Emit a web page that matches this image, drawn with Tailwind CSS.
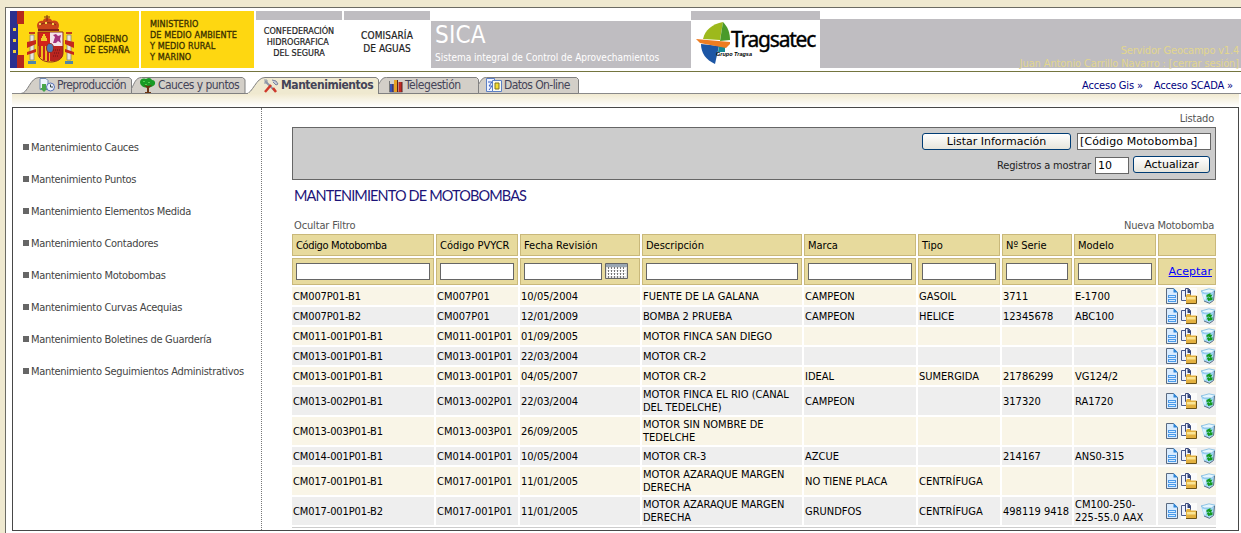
<!DOCTYPE html>
<html lang="es">
<head>
<meta charset="utf-8">
<title>SICA - Mantenimiento de Motobombas</title>
<script src="https://cdn.jsdelivr.net/npm/@tailwindcss/browser@4"></script>
</head>
<body class="h-[533px] overflow-hidden bg-[#efe9d0] pt-[7px] pl-[5px] text-[11px] leading-[13px] text-black font-['DejaVu_Sans_Condensed','DejaVu_Sans',sans-serif] [font-stretch:condensed]">

<svg class="hidden">
  <symbol id="doc" viewBox="0 0 12 16">
    <path d="M.5.5h7l4 4v11H.5z" fill="#d9ecff" stroke="#5a6a80"/>
    <path d="M7.500 0v4.500H12z" fill="#2f86d8"/>
    <path d="M2 7h8v3H2zM2 11h8v3H2z" fill="#4b9bea"/>
    <path d="M3 8.500h6M3 12.500h6" stroke="#d8ecff"/>
  </symbol>
  <symbol id="folder" viewBox="0 0 16 16">
    <path d="M0 0h16v16H0z" fill="#fbfbfb"/>
    <path d="M.5 2.500h4l2 2v8h-6z" fill="#eef2ff" stroke="#4a5a8a"/>
    <path d="M4.500.5h3l2 2v6h-5z" fill="#f3f6ff" stroke="#3c4a7a"/>
    <path d="M6.500 0L10 3.500V5H6.500z" fill="#33457c"/>
    <path d="M5 7.500L6 6h3l1 1.500h5.500V15H5z" fill="#e3b140"/>
    <path d="M6 9h8.500v2.500H6z" fill="#fae596"/>
    <path d="M5 15.500h10.500V8" fill="none" stroke="#6a5118"/>
  </symbol>
  <symbol id="bin" viewBox="0 0 14 16">
    <path d="M0 3l8-2 6 1-1 10-4.500 3.500L3 13z" fill="#a4d8f8"/>
    <path d="M0 3L8 .8l6 1.400L10.500 5 3 5z" fill="#e4f6ff" stroke="#7fb9e0" stroke-width=".8"/>
    <path d="M1.500 6L5 6.500 4.500 12 3 11z" fill="#dff3ff"/>
    <path d="M13.500 3l-1 9.500-4 2.800L3 13" fill="none" stroke="#5d6f84"/>
    <path d="M5.500 7l4-2v2l2-.5-2 3.500-2-1.500-2 .8zM11.500 12l-4.500 1v-1.500H5.500L7 8.800l1.500 1.400L11.500 9z" fill="#129a1d"/>
  </symbol>
</svg>

<div class="h-[540px] border-t border-l border-[#6b6b63] bg-white pt-[3px] pl-1">

  <header class="flex h-[57px] w-[1231px]">
    <div class="flex w-[129px] bg-[#fed711]">
      <svg class="shrink-0" width="68" height="57" viewBox="0 0 68 57">
        <path d="M0 0h7v57H0z" fill="#2b2f8f"/><path d="M7 0h7v13H7zM7 44h7v13H7z" fill="#b5291c"/><path d="M7 13h7v31H7z" fill="#fed711"/><path d="M7 13h1v31H7z" fill="#2b2f8f"/>
        <path d="M3 17h3v3H3zM3 28h3v3H3zM3 39h3v3H3z" fill="#f0cf3a"/>
        <path d="M28 18c-3-6 2-9 5-8 0-2 2-3 4-3s5 1 5 3c5-2 9 3 6 8z" fill="#c9441b"/>
        <path d="M30 14c4-3 12-3 16 0M37 4v6M34 6h6" fill="none" stroke="#7c2d12"/>
        <path d="M29 12h2v2h-2zM35 11h2v2h-2zM42 12h2v2h-2z" fill="#f5d34a"/>
        <path d="M28 19h21" stroke="#842015" stroke-width="2"/>
        <path d="M28 21h12v14H28z" fill="#d3231a"/><path d="M40 21h13v14H40z" fill="#f4e3ea"/>
        <path d="M28 35h12v15c-7 1-12-3-12-8z" fill="#f2bd1a"/><path d="M40 35h13v7c0 6-6 9-13 8z" fill="#b92420"/>
        <path d="M30 35v11M34 35v14M38 35v15" stroke="#c3231d" stroke-width="2"/>
        <path d="M31 30h6v-3h-1v-2h-1v-2h-2v2h-1v2h-1z" fill="#f2cc2c"/>
        <path d="M43 32l2-6-2-2 3-1 2 2 3-1-1 4 1 4-3-2-2 2z" fill="#a5317c"/>
        <ellipse cx="40" cy="37" rx="3.500" ry="4.500" fill="#4a7bb5" stroke="#9b2c20"/>
        <path d="M43 39h8M44 42h6M43 45h6" stroke="#6b1414" stroke-dasharray="1 1"/>
        <path d="M28 21h25v21c0 6-6 9-12.500 9S28 48 28 42z" fill="none" stroke="#8d2a1a"/>
        <path d="M20 24h4v25h-4zM57 24h4v25h-4z" fill="#e9e5dc" stroke="#8b8577" stroke-width=".8"/>
        <path d="M18 50h8v3h-8zM55 50h8v3h-8z" fill="#4f86a8"/><path d="M19 21h6v2h-6zM56 21h6v2h-6z" fill="#c53a1b"/>
        <path d="M17 31l9-2v4l-9 4zM17 41l9-3v3l-9 3zM64 31l-9-2v4l9 4zM64 41l-9-3v3l9 3z" fill="#c5261b"/>
      </svg>
      <p class="mt-[23px] ml-[6px] whitespace-nowrap text-[9px] leading-[11px] text-[#3a3000] [-webkit-text-stroke:0.3px]">GOBIERNO<br>DE ESPAÑA</p>
    </div>
    <div class="ml-0.5 w-[113px] bg-[#fed711] pt-[8px] pl-[9px]">
      <p class="whitespace-nowrap text-[9px] leading-[11px] tracking-[0.1px] text-[#3a3000] [-webkit-text-stroke:0.3px]">MINISTERIO<br>DE MEDIO AMBIENTE<br>Y MEDIO RURAL<br>Y MARINO</p>
    </div>
    <div class="ml-0.5 w-[86px] border-t-[9px] border-[#bfbdc1] pt-[6px] text-center">
      <p class="whitespace-nowrap text-[9px] leading-[11px] text-[#222] [-webkit-text-stroke:0.2px]">CONFEDERACIÓN<br>HIDROGRAFICA&nbsp;<br>DEL SEGURA</p>
    </div>
    <div class="ml-0.5 w-[86px] border-t-[9px] border-[#bfbdc1] pt-[9px] text-center">
      <p class="whitespace-nowrap text-[10px] leading-[13px] tracking-[0.1px] text-[#222] [-webkit-text-stroke:0.2px]">COMISARÍA<br>DE AGUAS</p>
    </div>
    <div class="mt-[10px] ml-px w-[260px] bg-[#bfbdc1] pl-1 text-white">
      <h1 class="mt-[3px] text-[24px] leading-[23px] tracking-[0.2px]">SICA</h1>
      <p class="mt-[4px] whitespace-nowrap text-[10px] leading-[13px]">Sistema integral de Control de Aprovechamientos</p>
    </div>
    <div class="flex w-[129px] border-t-[9px] border-[#bfbdc1]">
      <div class="relative">
        <svg width="40" height="48" viewBox="0 0 40 48">
          <path d="M12 19c2-9 9-15 20-17l-3 18z" fill="#9db91c"/>
          <path d="M32 2c5 5 7 11 7 18l-10 1z" fill="#4a9a2a"/>
          <path d="M10 24l18 2-4 18C15 40 10 33 10 24z" fill="#1c56a5"/>
          <path d="M28 26l6 1v5l-7 0z" fill="#168a94"/>
          <path d="M5 19l34 3v2l-4 4L9 23z" fill="#ee7d22"/>
        </svg>
        <p class="absolute top-[31px] left-[25px] whitespace-nowrap font-['Liberation_Sans',sans-serif] text-[5.500px] leading-[7px] font-bold italic">Grupo Tragsa</p>
      </div>
      <p class="mt-[8px] h-[22px] font-['Noto_Sans',sans-serif] text-[21px] leading-[22px] tracking-[-1.2px] [-webkit-text-stroke:0.4px]">Tragsatec</p>
    </div>
    <div class="mt-2 flex-1 bg-[#bfbdc1] pt-[25px] pr-[2px] text-right text-[#e2d68e]">
      <p class="tracking-[-0.2px]">Servidor Geocampo v1.4</p>
      <p class="tracking-[-0.12px]">Juan Antonio Carrillo Navarro : [cerrar sesión]</p>
    </div>
  </header>

  <div class="mt-[3px] h-px bg-[#74753f]"></div>

  <nav class="relative mt-[5px] ml-[2px] flex h-[17px] border-b border-[#8a8a8a] text-[12px] leading-[17px] text-[#444457]">
    <svg class="absolute top-0 left-0" width="580" height="17" viewBox="12 77 580 17">
      <g fill="#d3cfc8" stroke="#808080">
        <path d="M21 93.500c7 0 9-16 18-16h90l2.500 2v14z"/>
        <path d="M131.500 93.500v-5c3-5 4-11 10-11h101l2.500 2v14z"/>
        <path d="M378.500 93.500v-9c3-5 4-7 8-7h90l2 2v14z"/>
        <path d="M478.500 93.500v-9c3-5 4-7 8-7h90l2 2v14z"/>
      </g>
      <path d="M246 94c7-1 10-16.500 19-16.500h111l2.500 2V94" fill="#efe9d0" stroke="#808080"/>
      <path d="M248 93.500h130" stroke="#efe9d0"/>
      <g transform="translate(39 78)"><path d="M1 .5h6l2 2v9H1z" fill="#eef3fb" stroke="#6d87b0"/><path d="M3 6h4v4h2l-4 4-4-4h2z" fill="#48a548"/><circle cx="11.500" cy="9" r="4" fill="#e8eefb" stroke="#5771b8"/><path d="M11.500 6.500V9h2.500" fill="none" stroke="#344"/></g>
      <g transform="translate(140 78)"><path d="M0 4c0-4 5-4 6-3 3-2 5-1 6 1 4 0 4 5 1 6-3 2-9 2-11 0C1 7 0 6 0 4z" fill="#189a25"/><path d="M3 3h2v1H3zM8 4h2v1H8zM5 6h2v1H5z" fill="#4fd04f"/><path d="M4 7l3 3v4H5v1h6v-1H9v-4l3-3-4 1z" fill="#6a3412"/></g>
      <g transform="translate(263 79)" fill="none"><path d="M2 2l10 10" stroke="#8e96a8" stroke-width="2"/><path d="M9 1l4 1 2 3-2 1-3-3" stroke="#7b839b" fill="#c5cbd9"/><path d="M8 6L2 13" stroke="#d0392b" stroke-width="2.500"/><path d="M1 1l3 0v3H1" stroke="#8e96a8"/><path d="M10 9l3 4" stroke="#d0392b" stroke-width="2.500"/></g>
      <g transform="translate(389 79)"><path d="M.5 2v11h13" fill="none" stroke="#777"/><path d="M1 5h3.500v8H1z" fill="#3553b8"/><path d="M5 1h3.500v12H5z" fill="#e8a124"/><path d="M9.500 3H13v10H9.500z" fill="#c22a23"/><path d="M4 5v8M8.500 1v12M13 3v10" stroke="#522"/></g>
      <g transform="translate(486 78)"><path d="M.5.500h8v13h-8z" fill="#eef3ff" stroke="#5d80c5"/><path d="M6.500 2.500h9v11h-9z" fill="#fbfbf0" stroke="#5d80c5"/><path d="M2 4h4l-3 4h3l-3 4" fill="none" stroke="#3c62c4"/><path d="M9 5h4v6H9z" fill="#f3dc32" stroke="#81751d"/></g>
    </svg>
    <a class="relative ml-[45px] w-[101px] whitespace-nowrap tracking-[-0.6px]">Preproducción</a>
    <a class="relative w-[123px] whitespace-nowrap tracking-[-0.55px]">Cauces y puntos</a>
    <a class="relative w-[124px] whitespace-nowrap font-bold tracking-[-0.45px]">Mantenimientos</a>
    <a class="relative w-[99px] whitespace-nowrap tracking-[-0.45px]">Telegestión</a>
    <a class="relative whitespace-nowrap tracking-[-0.6px]">Datos On-line</a>
    <div class="ml-auto flex gap-[11px] pr-[8px] text-[11px] leading-[18px] tracking-[-0.15px] whitespace-nowrap text-[#000080]"><a>Acceso Gis »</a><a>Acceso SCADA »</a></div>
  </nav>
  <div class="ml-[2px] h-[13px] w-[1227px] bg-linear-to-b from-[#f1ead1] to-white"></div>

  <main class="ml-[2px] flex h-[424px] w-[1227px] border border-[#484848]">
    <aside class="w-[249px] border-r border-dotted border-[#777] pt-[23px] pl-[10px] tracking-[-0.3px] text-[#444]">
      <ul>
        <li class="flex h-8 items-center gap-0.5 whitespace-nowrap"><i class="size-1.5 bg-[#666]"></i>Mantenimiento Cauces</li>
        <li class="flex h-8 items-center gap-0.5 whitespace-nowrap"><i class="size-1.5 bg-[#666]"></i>Mantenimiento Puntos</li>
        <li class="flex h-8 items-center gap-0.5 whitespace-nowrap"><i class="size-1.5 bg-[#666]"></i>Mantenimiento Elementos Medida</li>
        <li class="flex h-8 items-center gap-0.5 whitespace-nowrap"><i class="size-1.5 bg-[#666]"></i>Mantenimiento Contadores</li>
        <li class="flex h-8 items-center gap-0.5 whitespace-nowrap"><i class="size-1.5 bg-[#666]"></i>Mantenimiento Motobombas</li>
        <li class="flex h-8 items-center gap-0.5 whitespace-nowrap"><i class="size-1.5 bg-[#666]"></i>Mantenimiento Curvas Acequias</li>
        <li class="flex h-8 items-center gap-0.5 whitespace-nowrap"><i class="size-1.5 bg-[#666]"></i>Mantenimiento Boletines de Guardería</li>
        <li class="flex h-8 items-center gap-0.5 whitespace-nowrap"><i class="size-1.5 bg-[#666]"></i>Mantenimiento Seguimientos Administrativos</li>
      </ul>
    </aside>
    <section class="ml-[30px] w-[924px]">
      <p class="h-[19px] pt-1 pr-0.5 text-right tracking-[-0.2px] text-[#555]">Listado</p>
      <form class="h-[53px] border border-[#666] bg-[#ccc] pt-[5px] pr-1">
        <div class="flex justify-end gap-[6px] font-['DejaVu_Sans',sans-serif] [font-stretch:normal]">
          <button type="button" class="h-[17px] w-[149px] rounded-[3px] border border-[#003c74] bg-linear-to-b from-white to-[#e6e5dc] text-[11px] leading-[15px]">Listar Información</button>
          <div class="h-[17px] w-[134px] overflow-hidden border border-[#666] bg-white pl-[2px] text-[11px] leading-[16px] tracking-[0.1px] whitespace-nowrap">[Código Motobomba]</div>
        </div>
        <div class="mt-[6px] flex justify-end">
          <span class="mr-[4px] leading-[20px] tracking-[-0.15px] text-[#222]">Registros a mostrar</span>
          <div class="mt-[1px] h-[17px] w-[34px] border border-[#666] bg-white pl-[2px] font-['DejaVu_Sans',sans-serif] text-[11px] leading-[16px] [font-stretch:normal]">10</div>
          <button type="button" class="mr-[1px] ml-[4px] h-[17px] w-[77px] rounded-[3px] border border-[#003c74] bg-linear-to-b from-white to-[#e6e5dc] font-['DejaVu_Sans',sans-serif] text-[11px] leading-[15px] [font-stretch:normal]">Actualizar</button>
        </div>
      </form>
      <h2 class="mt-[6px] ml-[2px] h-[21px] font-['Lato',sans-serif] text-[14.500px] leading-[20px] tracking-[-0.87px] whitespace-nowrap text-[#1d1478]">MANTENIMIENTO DE MOTOBOMBAS</h2>
      <div class="mt-[12px] flex h-[15px] justify-between px-[2px] text-[#555]"><a class="tracking-[-0.15px]">Ocultar Filtro</a><a class="tracking-[-0.25px]">Nueva Motobomba</a></div>
      <div id="grid" class="grid grid-cols-[142px_82px_120px_160px_112px_82px_70px_82px_58px] gap-0.5"></div>
      <div class="mt-0.5 h-px bg-[#ccc]"></div>
    </section>
  </main>
</div>

<script>
const heads = ['Código Motobomba', 'Código PVYCR', 'Fecha Revisión', 'Descripción', 'Marca', 'Tipo', 'Nº Serie', 'Modelo', ''];
const rows = [
  ['CM007P01-B1', 'CM007P01', '10/05/2004', 'FUENTE DE LA GALANA', 'CAMPEON', 'GASOIL', '3711', 'E-1700'],
  ['CM007P01-B2', 'CM007P01', '12/01/2009', 'BOMBA 2 PRUEBA', 'CAMPEON', 'HELICE', '12345678', 'ABC100'],
  ['CM011-001P01-B1', 'CM011-001P01', '01/09/2005', 'MOTOR FINCA SAN DIEGO', '', '', '', ''],
  ['CM013-001P01-B1', 'CM013-001P01', '22/03/2004', 'MOTOR CR-2', '', '', '', ''],
  ['CM013-001P01-B1', 'CM013-001P01', '04/05/2007', 'MOTOR CR-2', 'IDEAL', 'SUMERGIDA', '21786299', 'VG124/2'],
  ['CM013-002P01-B1', 'CM013-002P01', '22/03/2004', 'MOTOR FINCA EL RIO (CANAL<br>DEL TEDELCHE)', 'CAMPEON', '', '317320', 'RA1720'],
  ['CM013-003P01-B1', 'CM013-003P01', '26/09/2005', 'MOTOR SIN NOMBRE DE<br>TEDELCHE', '', '', '', ''],
  ['CM014-001P01-B1', 'CM014-001P01', '10/05/2004', 'MOTOR CR-3', 'AZCUE', '', '214167', 'ANS0-315'],
  ['CM017-001P01-B1', 'CM017-001P01', '11/01/2005', 'MOTOR AZARAQUE MARGEN<br>DERECHA', 'NO TIENE PLACA', 'CENTRÍFUGA', '', ''],
  ['CM017-001P01-B2', 'CM017-001P01', '11/01/2005', 'MOTOR AZARAQUE MARGEN<br>DERECHA', 'GRUNDFOS', 'CENTRÍFUGA', '498119 9418', 'CM100-250-<br>225-55.0 AAX']
];
const icons = '<svg class="h-4 w-3"><use href="#doc"/></svg><svg class="ml-[3px] size-4"><use href="#folder"/></svg><svg class="ml-[4px] h-4 w-[14px]"><use href="#bin"/></svg>';
const calendar = '<svg class="ml-[3px]" width="23" height="17" viewBox="0 0 23 17"><path d="M.5.500h22v15H.5z" fill="#e4e4e4" stroke="#666"/><path d="M1 2.500h21" stroke="#9aa7b3" stroke-width="3"/><path d="M2 6h19M2 9h19M2 12h19" stroke="#fff" stroke-width="2"/><path d="M3.500 4v11M6.500 4v11M9.500 4v11M12.500 4v11M15.500 4v11M18.500 4v11" stroke="#777" stroke-dasharray="2 1"/></svg>';
let html = '';
heads.forEach((h, i) => {
  html += `<div class="${i ? '' : 'tracking-[-0.35px] '}h-[22px] border border-[#c9b87a] bg-[#e7da9d] pl-[3px] leading-[21px] whitespace-nowrap">${h}</div>`;
});
heads.forEach((h, i) => {
  const inner = i === 8
    ? '<a class="ml-auto font-[\'DejaVu_Sans\',sans-serif] text-[11px] tracking-[0.1px] text-[#00f] underline [font-stretch:normal]">Aceptar</a>'
    : i === 2
      ? '<div class="h-[17px] w-[78px] border border-[#666] bg-white"></div>' + calendar
      : '<div class="h-[17px] flex-1 border border-[#666] bg-white"></div>';
  html += `<div class="flex h-[27px] items-center border border-[#c9b87a] bg-[#e7da9d] px-[3px]">${inner}</div>`;
});
rows.forEach((r, n) => {
  const tall = r.some(c => c.includes('<br>'));
  const cls = (n % 2 ? 'bg-[#eeeeee] ' : 'bg-[#f9f5e7] ') + (tall ? 'h-7 ' : 'h-[18px] ');
  r.forEach((c, i) => {
    html += `<div class="${cls}${i ? '' : 'tracking-[-0.12px] '}flex items-center pl-px whitespace-nowrap"><span>${c}</span></div>`;
  });
  html += `<div class="${cls}flex items-center justify-end pr-px">${icons}</div>`;
});
document.getElementById('grid').innerHTML = html;
</script>
</body>
</html>
